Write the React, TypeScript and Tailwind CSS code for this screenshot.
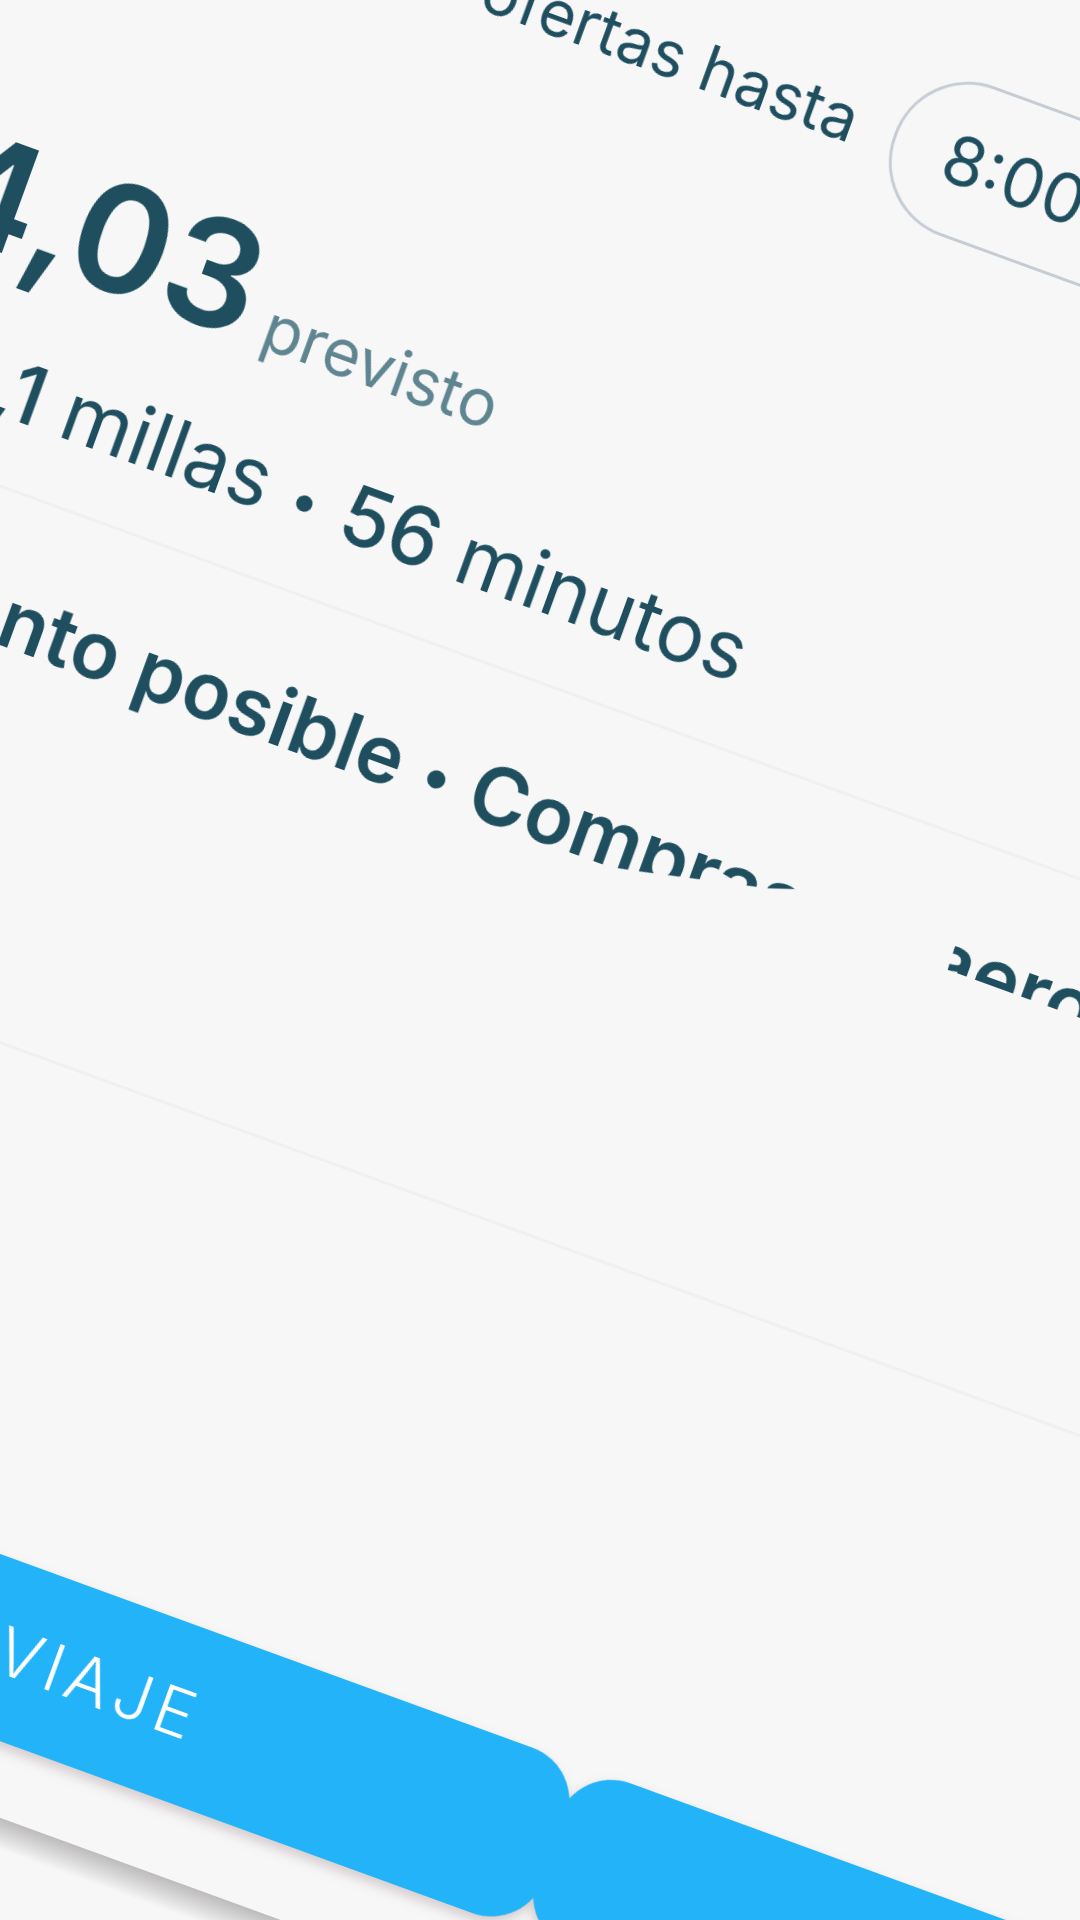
export default function App() {
  return (
    <div className="h-[1920px] w-[1080px] overflow-hidden bg-[#f7f7f8] font-['Inter','Liberation_Sans',sans-serif] text-[#1f4f5f]">
      {/* the whole trip card is photographed at an angle */}
      <div className="ml-[-273px] mt-[-419px] w-[2400px] origin-top-left rotate-[20deg] blur-[0.7px]">
        {/* offer deadline */}
        <div className="mt-[41px] flex h-[165px] items-center">
          <span className="w-[1233px] shrink-0 text-right text-[64px] leading-none">Aceptar ofertas hasta</span>
          <div className="ml-[39px] flex h-[159px] w-[420px] items-center rounded-[78px] border-[3px] border-[#c5ccd4] pl-[52px] text-[68px] leading-none">
            8:00 a. m.
          </div>
        </div>

        {/* price */}
        <div className="mt-[205px] flex items-baseline pl-[298px]">
          <span className="text-[150px] leading-none font-semibold">$4,03</span>
          <span className="ml-[18px] text-[65px] leading-none text-[#5f8591]">previsto</span>
        </div>

        {/* distance and time */}
        <div className="mt-[63px] pl-[410px] text-[81px] leading-none whitespace-nowrap">
          <span className="font-medium">42,1</span> millas{" "}
          <span className="mx-[4px] align-[6px] text-[52px] font-bold">•</span>{" "}
          <span className="font-medium">56</span> minutos
        </div>

        <div className="mt-[53px] h-[3px] w-full bg-[#f0f0f1]" />

        {/* trip tags, partly retouched out in the photo */}
        <div className="relative mt-[79px] flex h-[81px] pl-[372px] text-[80px] leading-none font-semibold whitespace-nowrap">
          <span>
            Aumento posible <span className="mx-[2px] align-[6px] text-[58px]">•</span> Compras
          </span>
          <span className="ml-[138px]">aeropuerto</span>
          <div className="absolute top-[-20px] left-0 h-[148px] w-[2400px] bg-[#f7f7f8] [clip-path:polygon(1200px_100px,1280px_84px,1411px_55px,1456px_40px,1456px_0px,1605px_0px,1608px_70px,2400px_70px,2400px_148px,1200px_148px)]" />
        </div>

        <div className="mt-[360px] h-[3px] w-full bg-[#f0f0f1]" />

        {/* actions */}
        <div className="mt-[479px] flex drop-shadow-[0_6px_6px_rgba(130,100,100,0.3)]">
          <button className="flex h-[176px] w-[1540px] shrink-0 items-center justify-end rounded-[56px] bg-[#22b3f9] pr-[379px] text-[66px] font-light tracking-[0.09em] text-white">
            RESERVAR VIAJE
          </button>
          <button className="ml-[-8px] flex h-[176px] w-[850px] shrink-0 items-center rounded-[56px] bg-[#22b3f9] pl-[600px] text-[66px] font-light tracking-[0.09em] text-white">
            ACEPTAR
          </button>
        </div>

        {/* bottom sheet edge */}
        <div className="mt-[72px] h-[30px] w-full bg-gradient-to-b from-[#bdbbbb] to-[#f7f7f8]" />
      </div>
    </div>
  );
}
